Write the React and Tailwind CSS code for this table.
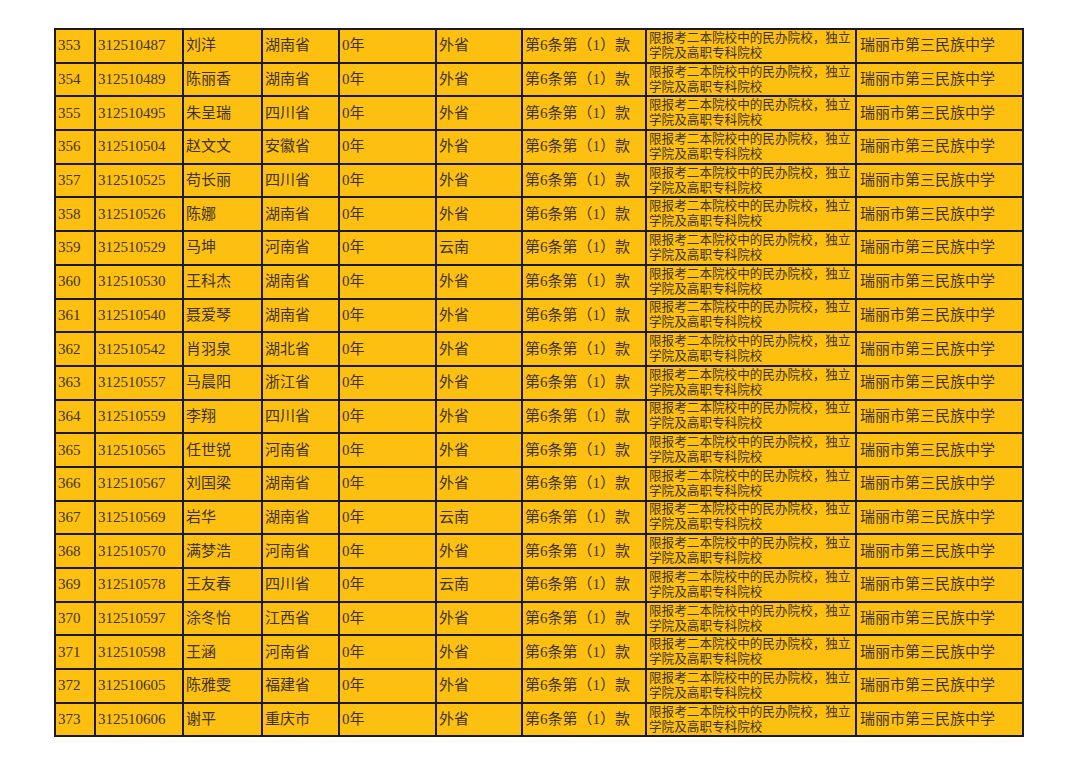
const rows = [
  ["353", "312510487", "刘洋", "湖南省", "外省"],
  ["354", "312510489", "陈丽香", "湖南省", "外省"],
  ["355", "312510495", "朱呈瑞", "四川省", "外省"],
  ["356", "312510504", "赵文文", "安徽省", "外省"],
  ["357", "312510525", "苟长丽", "四川省", "外省"],
  ["358", "312510526", "陈娜", "湖南省", "外省"],
  ["359", "312510529", "马坤", "河南省", "云南"],
  ["360", "312510530", "王科杰", "湖南省", "外省"],
  ["361", "312510540", "聂爱琴", "湖南省", "外省"],
  ["362", "312510542", "肖羽泉", "湖北省", "外省"],
  ["363", "312510557", "马晨阳", "浙江省", "外省"],
  ["364", "312510559", "李翔", "四川省", "外省"],
  ["365", "312510565", "任世锐", "河南省", "外省"],
  ["366", "312510567", "刘国梁", "湖南省", "外省"],
  ["367", "312510569", "岩华", "湖南省", "云南"],
  ["368", "312510570", "满梦浩", "河南省", "外省"],
  ["369", "312510578", "王友春", "四川省", "云南"],
  ["370", "312510597", "涂冬怡", "江西省", "外省"],
  ["371", "312510598", "王涵", "河南省", "外省"],
  ["372", "312510605", "陈雅雯", "福建省", "外省"],
  ["373", "312510606", "谢平", "重庆市", "外省"],
];

const cell = "border-2 border-[#1c1a14] pl-[2px] align-middle whitespace-nowrap";

export default function App() {
  return (
    <div
      className="w-[1080px] h-[764px] bg-white pt-[28px] pl-[54px] text-[#3f3420]"
      style={{ fontFamily: '"Liberation Serif", "Noto Sans CJK SC", serif' }}
    >
      <table className="border-collapse table-fixed w-[968px] bg-[#fdbf10] text-[15px] leading-none">
        <colgroup>
          <col className="w-[40px]" />
          <col className="w-[88px]" />
          <col className="w-[79px]" />
          <col className="w-[77px]" />
          <col className="w-[97px]" />
          <col className="w-[86px]" />
          <col className="w-[124px]" />
          <col className="w-[210px]" />
          <col className="w-[167px]" />
        </colgroup>
        <tbody>
          {rows.map((r) => (
            <tr key={r[0]} className="h-[33.7px]">
              <td className={cell}>{r[0]}</td>
              <td className={cell}>{r[1]}</td>
              <td className={cell}>{r[2]}</td>
              <td className={cell}>{r[3]}</td>
              <td className={cell}>0年</td>
              <td className={cell}>{r[4]}</td>
              <td className={cell}>第6条第（1）款</td>
              <td className={cell + " text-[12.6px] leading-[15px]"}>
                限报考二本院校中的民办院校，独立
                <br />
                学院及高职专科院校
              </td>
              <td className={cell + " pl-[3px]"}>瑞丽市第三民族中学</td>
            </tr>
          ))}
        </tbody>
      </table>
    </div>
  );
}
